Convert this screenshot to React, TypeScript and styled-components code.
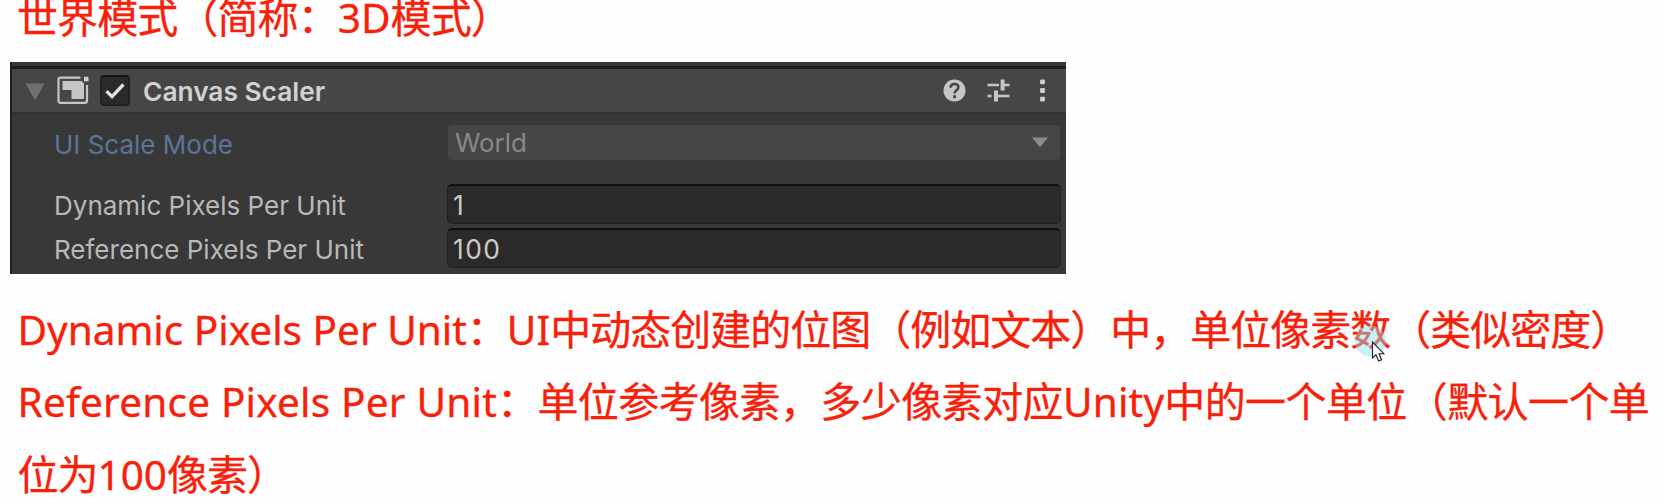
import React from "react";
import styled, { createGlobalStyle } from "styled-components";

const GlobalStyle = createGlobalStyle`
  html, body {
    margin: 0;
    background: #fefefe;
  }
`;

const Page = styled.main`
  display: flex;
  flex-direction: column;
  width: 1664px;
  height: 502px;
  overflow: hidden;
  background: #fefefe;
  color: #f9200a;
  font-family: "Noto Sans", "Noto Sans CJK SC", sans-serif;
  font-size: 41px;
`;

const Heading = styled.h1`
  flex: none;
  margin: 0;
  padding-left: 17px;
  height: 62px;
  box-sizing: border-box;
  font-size: 41px;
  font-weight: 400;
  line-height: 34px;
  letter-spacing: -0.9px;
  white-space: nowrap;
  -webkit-text-stroke: 0.3px;
`;

const Notes = styled.section`
  display: flex;
  flex-direction: column;
  padding: 19px 0 0 17.5px;
  -webkit-text-stroke: 0.3px;
`;

const NoteLine = styled.p<{ $tracking?: number }>`
  flex: none;
  margin: 0;
  height: 72.3px;
  line-height: 72.3px;
  white-space: nowrap;
  letter-spacing: ${(p) => p.$tracking ?? -1}px;
`;

const Latin = styled.span<{ $tracking?: number }>`
  font-size: 40.5px;
  letter-spacing: ${(p) => p.$tracking ?? 0}px;
`;

const Panel = styled.section`
  flex: none;
  display: flex;
  flex-direction: column;
  box-sizing: border-box;
  width: 1056px;
  height: 212px;
  margin-left: 10px;
  border-left: 2px solid #1f1f1f;
  background: #383838;
  color: #b9b9b9;
  font-family: Inter, sans-serif;
  font-size: 26.1px;
  line-height: 32px;
`;

const Header = styled.header`
  display: flex;
  align-items: center;
  box-sizing: border-box;
  height: 48px;
  margin-top: 4px;
  padding: 0 12px 0 13px;
  border-top: 3px solid #1d1d1d;
  border-bottom: 2px solid #303030;
  background: #464646;
`;

const Foldout = styled.svg`
  width: 20px;
  height: 18px;
  margin-top: 3px;
`;

const ComponentIcon = styled.svg`
  width: 32px;
  height: 29px;
  margin-left: 12px;
`;

const Checkbox = styled.span`
  display: flex;
  align-items: center;
  justify-content: center;
  box-sizing: border-box;
  width: 30px;
  height: 31px;
  margin-left: 11px;
  border: 2px solid #212121;
  border-top-color: #141414;
  border-radius: 4px;
  background: #2a2a2a;
`;

const Title = styled.h2`
  flex: 1;
  margin: 3px 0 0 13px;
  color: #d2d2d2;
  font-size: 26.3px;
  font-weight: 600;
  line-height: 32px;
`;

const HeaderActions = styled.div`
  display: flex;
  align-items: center;
  gap: 21px;
`;

const Fields = styled.div`
  display: flex;
  flex-direction: column;
  padding: 11px 5px 0 41px;
`;

const Row = styled.div<{ $gap?: number }>`
  display: grid;
  grid-template-columns: 394px 1fr;
  margin-bottom: ${(p) => p.$gap ?? 0}px;
`;

const Label = styled.label<{ $overridden?: boolean }>`
  align-self: center;
  height: 32px;
  padding: ${(p) => (p.$overridden ? 4 : 3)}px 0 0 1px;
  color: ${(p) => (p.$overridden ? "#5d7499" : "#b9b9b9")};
  font-size: 26px;
  white-space: nowrap;
`;

const Dropdown = styled.div`
  display: flex;
  align-items: center;
  justify-content: space-between;
  height: 35px;
  margin: 0 1px;
  padding: 0 12px 0 7px;
  border-radius: 4px;
  background: #464646;
  color: #898989;
  font-size: 25.8px;
`;

const NumberField = styled.div`
  display: flex;
  align-items: center;
  box-sizing: border-box;
  height: 40px;
  padding: 0 5px 0 5px;
  border: 1px solid #212121;
  border-top: 2px solid #101010;
  border-radius: 5px;
  background: #2a2a2a;
  color: #cacaca;
  font-size: 26.4px;
  letter-spacing: 1.4px;
`;

const PointerMark = styled.svg`
  position: absolute;
  left: 1354px;
  top: 324px;
  width: 36px;
  height: 40px;
`;

export default function App() {
  return (
    <Page lang="zh-CN">
      <GlobalStyle />
      <Heading>
        世界模式（简称：<Latin>3D</Latin>模式）
      </Heading>

      <Panel>
        <Header>
          <Foldout viewBox="0 0 20 18">
            <path d="M0.5 0.5H19.5L10 17.5Z" fill="#707070" />
          </Foldout>
          <ComponentIcon viewBox="0 0 32 29">
            <path
              d="M23.5 1.7H3.5Q1.5 1.7 1.5 3.7V24.5Q1.5 26.8 3.5 26.8H28Q30 26.8 30 24.5V9"
              fill="none"
              stroke="#c6c6c6"
              strokeWidth="2.2"
            />
            <path d="M5.5 5H24.5L27 7.5V23H14.5V14H5.5Z" fill="#c6c6c6" />
            <path d="M27 0.8H31.5V5.3H27Z" fill="#d0d0d0" />
          </ComponentIcon>
          <Checkbox>
            <svg width="22" height="20" viewBox="0 0 22 20">
              <path
                d="M2.5 10.2L8 15.7L19.4 3.5"
                fill="none"
                stroke="#e2e2e2"
                strokeWidth="3.3"
              />
            </svg>
          </Checkbox>
          <Title>Canvas Scaler</Title>
          <HeaderActions>
            <svg width="23" height="23" viewBox="0 0 23 23">
              <circle cx="11.5" cy="11.5" r="11" fill="#c6c6c6" />
              <path
                d="M7.6 8.6C7.8 3.8 15.5 3.8 15.4 8.5C15.3 11 11.6 11 11.6 14.4"
                fill="none"
                stroke="#484848"
                strokeWidth="2.6"
              />
              <rect x="10.1" y="16.2" width="3" height="3" fill="#484848" />
            </svg>
            <svg width="23" height="23" viewBox="0 0 23 23">
              <path
                d="M0.5 6H12M15 6H22.5M0.5 17H4.5M9 17H22.5"
                stroke="#c6c6c6"
                strokeWidth="2.4"
              />
              <path
                d="M15.6 0.5V11.5M9 11.5V22.5"
                stroke="#c6c6c6"
                strokeWidth="4"
              />
            </svg>
            <svg width="23" height="23" viewBox="0 0 23 23">
              <rect x="9.1" y="0.5" width="4.8" height="4.8" rx="1" fill="#cfcfcf" />
              <rect x="9.1" y="9.1" width="4.8" height="4.8" rx="1" fill="#cfcfcf" />
              <rect x="9.1" y="17.7" width="4.8" height="4.8" rx="1" fill="#cfcfcf" />
            </svg>
          </HeaderActions>
        </Header>

        <Fields>
          <Row $gap={23}>
            <Label $overridden>UI Scale Mode</Label>
            <Dropdown>
              <span>World</span>
              <svg width="16" height="11" viewBox="0 0 16 11">
                <path d="M0 0.5H16L8 10.5Z" fill="#8a8a8a" />
              </svg>
            </Dropdown>
          </Row>
          <Row $gap={4}>
            <Label>Dynamic Pixels Per Unit</Label>
            <NumberField>1</NumberField>
          </Row>
          <Row>
            <Label>Reference Pixels Per Unit</Label>
            <NumberField>100</NumberField>
          </Row>
        </Fields>
      </Panel>

      <Notes>
        <NoteLine>
          <Latin>Dynamic Pixels Per Unit</Latin>：<Latin>UI</Latin>
          中动态创建的位图（例如文本）中，单位像素数（类似密度）
        </NoteLine>
        <NoteLine $tracking={-0.58}>
          <Latin $tracking={0.2}>Reference Pixels Per Unit</Latin>
          ：单位参考像素，多少像素对应
          <Latin $tracking={0.2}>Unity</Latin>中的一个单位（默认一个单
        </NoteLine>
        <NoteLine>
          位为<Latin>100</Latin>像素）
        </NoteLine>
      </Notes>

      <PointerMark viewBox="0 0 36 40">
        <circle cx="16.5" cy="17" r="15.5" fill="#8be3ea" fillOpacity="0.45" />
        <path
          d="M18.5 18V34L22 30.8L24.6 37L27.6 35.7L25 29.7H29.8Z"
          fill="#ffffff"
          stroke="#1a2030"
          strokeWidth="1.1"
        />
      </PointerMark>
    </Page>
  );
}
